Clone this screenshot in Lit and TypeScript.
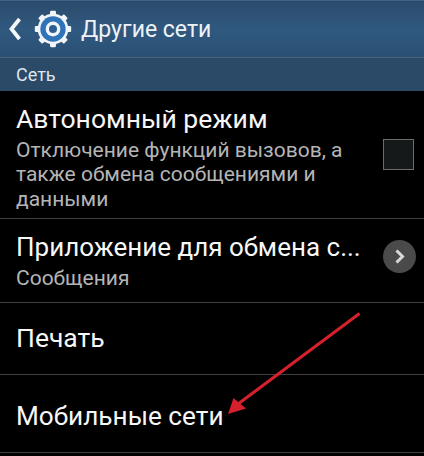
import { LitElement, html, css, svg } from "lit";
import { customElement } from "lit/decorators.js";

@customElement("app-root")
export class AppRoot extends LitElement {
  static styles = css`
    :host { display: block; width: 424px; height: 456px; overflow: hidden; background: #000; position: relative; font-family: Roboto, "Noto Sans", sans-serif; color: #fff; }
    .bar { height: 57px; box-sizing: border-box; display: flex; align-items: center; background: linear-gradient(#2b4a6b, #30597f 50%, #2a4f74); border-top: 1px solid #3f6283; }
    .bar svg.back { margin-left: 6px; width: 16px; height: 26px; flex: none; }
    .bar svg.gear { margin-left: 12px; width: 38px; height: 38px; flex: none; }
    .title { margin-left: 9px; font-size: 23px; color: #eef2f5; }
    .section { height: 34px; box-sizing: border-box; padding: 6px 0 0 16px; font-size: 18px; line-height: 22px; color: #dfe6ec; background: #2a4a68; border-top: 1px solid #4b6175; }
    .row { box-sizing: border-box; display: flex; align-items: center; padding: 0 8px 0 16px; border-bottom: 1px solid #404040; }
    .text { flex: 1; min-width: 0; }
    .name { font-size: 26.5px; line-height: 32px; white-space: nowrap; color: #f7f7f7; }
    .sub { font-size: 21px; line-height: 25px; margin-top: 3px; color: #b5b5b5; }
    .r1 { height: 128px; padding-top: 5px; }
    .r1 .sub { width: 360px; margin-top: 3px; line-height: 24.4px; }
    .r2 { height: 84px; }
    .r2 .name { font-size: 26px; }
    .r3 { height: 72px; padding-bottom: 2px; }
    .r4 { height: 78px; padding-top: 5px; }
    .r4 .name { font-size: 26.2px; }
    .check { width: 31px; height: 31px; flex: none; box-sizing: border-box; border: 1.5px solid #6b6d6d; background: #16191a; margin: -5px 2px 0 0; }
    .go { width: 33px; height: 33px; flex: none; margin-top: -8px; }
    .arrow { position: absolute; left: 0; top: 0; width: 424px; height: 456px; pointer-events: none; }
  `;

  render() {
    return html`
      <div class="bar">
        <svg class="back" viewBox="0 0 16 26"><path d="M13.5 3 5.5 13l8 10" fill="none" stroke="#f4f6f8" stroke-width="3.8"/></svg>
        <svg class="gear" viewBox="0 0 36 36">
          <g fill="#f2f5f8">
            <circle cx="18" cy="18" r="14.5"/>
            ${[0, 45, 90, 135, 180, 225, 270, 315].map(
              (a) => svg`<rect x="15.2" y="0.8" width="5.6" height="6" rx="1" transform="rotate(${a} 18 18)"/>`
            )}
          </g>
          <circle cx="18" cy="18" r="12" fill="#2f73b8"/>
          <circle cx="18" cy="18" r="7" fill="#f2f5f8"/>
          <circle cx="18" cy="18" r="3.8" fill="#2c5f90"/>
        </svg>
        <span class="title">Другие сети</span>
      </div>
      <div class="section">Сеть</div>
      <div class="row r1">
        <div class="text">
          <div class="name">Автономный режим</div>
          <div class="sub">Отключение функций вызовов, а также обмена сообщениями и данными</div>
        </div>
        <div class="check"></div>
      </div>
      <div class="row r2">
        <div class="text">
          <div class="name">Приложение для обмена с...</div>
          <div class="sub">Сообщения</div>
        </div>
        <svg class="go" viewBox="0 0 33 33">
          <circle cx="16.5" cy="16.5" r="16.5" fill="#4a4a4a"/>
          <path d="M13.5 10.5l6 6-6 6" fill="none" stroke="#d8d8d8" stroke-width="3"/>
        </svg>
      </div>
      <div class="row r3"><div class="name">Печать</div></div>
      <div class="row r4"><div class="name">Мобильные сети</div></div>
      <svg class="arrow" viewBox="0 0 424 456">
        <path d="M359.5 313.5 238 404" stroke="#d6212c" stroke-width="3" fill="none"/>
        <path d="M228 414 233.5 398 246 408.5Z" fill="#d6212c"/>
      </svg>
    `;
  }
}
